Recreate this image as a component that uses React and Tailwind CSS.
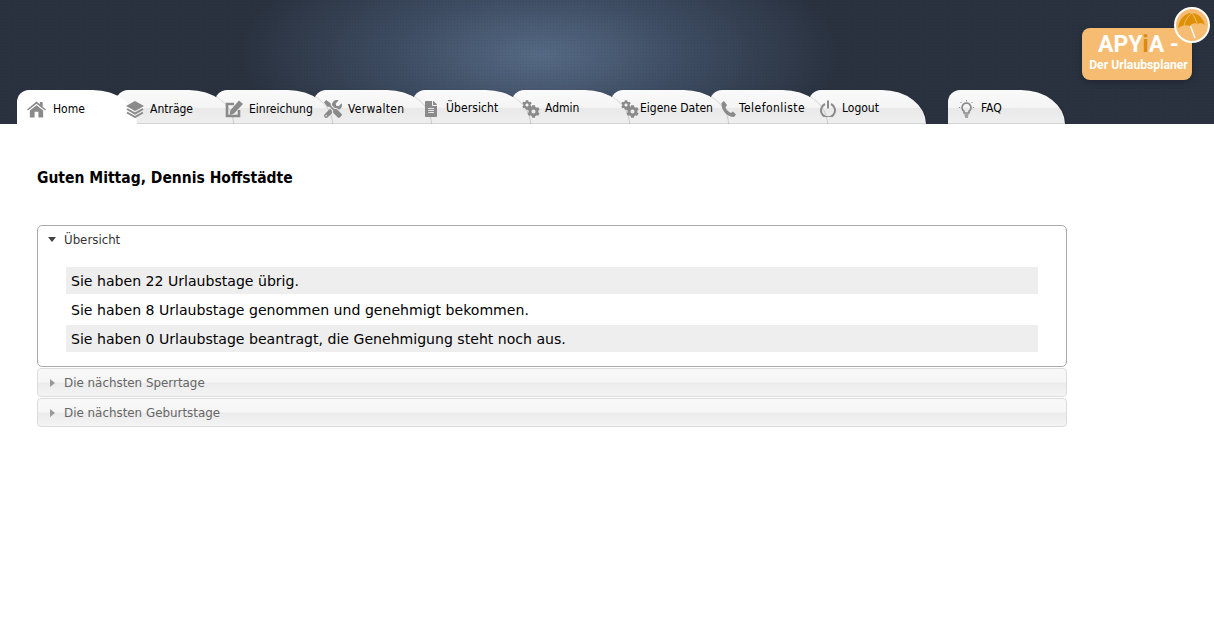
import { FaTools, FaFileAlt, FaCog } from 'react-icons/fa';

function HomeIcon() {
  return (
    <svg width="19" height="18" viewBox="0 0 20 18" fill="#8a8a8a" className="shrink-0">
      <path d="M0 9.5 L10 1 L13.5 4 V1.5 H16.5 V6.5 L20 9.5 L19 10.5 L10 3.5 L1 10.5 Z" />
      <path d="M3 10.5 L10 5 L17 10.5 V18 H12 V12 H8 V18 H3 Z" />
    </svg>
  );
}

function LayersIcon() {
  return (
    <svg width="18" height="18" viewBox="0 0 18 18" fill="none" className="shrink-0">
      <path d="M9 1 L18 6 L9 11 L0 6 Z" fill="#8a8a8a" />
      <path d="M1 9 L9 13.5 L17 9 M1 12.5 L9 17 L17 12.5" stroke="#8a8a8a" strokeWidth="2" />
    </svg>
  );
}

function PenIcon() {
  return (
    <svg width="18" height="18" viewBox="0 0 18 18" fill="none" className="shrink-0">
      <path d="M14 10 V16 H2 V4 H9" stroke="#8a8a8a" strokeWidth="2.6" />
      <path d="M14 0.5 L18 4 L9 13.5 L4.5 15 L5.5 10 Z" fill="#8a8a8a" />
    </svg>
  );
}

function PhoneIcon() {
  return (
    <svg width="15" height="16" viewBox="0 0 15 16" fill="#8a8a8a" className="shrink-0">
      <path d="M3 0 L6 4 L4.5 6.5 C5.5 9 7.5 11 10 12 L12 10.5 L15 13.5 L13 16 C6 16 0 9 0.5 2 Z" />
    </svg>
  );
}

function PowerIcon() {
  return (
    <svg width="16" height="17" viewBox="0 0 16 17" fill="none" stroke="#8a8a8a" strokeWidth="2" className="shrink-0">
      <path d="M5 4 A7 7 0 1 0 11 4" />
      <path d="M8 0.5 V8.5" />
    </svg>
  );
}

function BulbIcon() {
  return (
    <svg width="15" height="18" viewBox="0 0 15 18" fill="none" stroke="#8a8a8a" className="shrink-0">
      <path d="M7.5 3 A4.5 4.5 0 0 0 5 11.2 V13 H10 V11.2 A4.5 4.5 0 0 0 7.5 3 Z" strokeWidth="1.6" />
      <path d="M5.5 15 H9.5 M6 17 H9" strokeWidth="1.5" />
      <path d="M7.5 0 V1.5 M1.5 2 L2.5 3 M13.5 2 L12.5 3 M0 7.5 H1.2 M13.8 7.5 H15" strokeWidth="1" />
    </svg>
  );
}

function GearsIcon() {
  return (
    <span className="relative h-[18px] w-[18px] shrink-0 text-[#8a8a8a]">
      <FaCog size={10} className="absolute top-0 left-0" />
      <FaCog size={13} className="absolute right-0 bottom-0" />
    </span>
  );
}

const tabs = [
  { label: 'Home', icon: <HomeIcon />, active: true, pad: 'pl-[10px]', text: 'ml-[7px]' },
  { label: 'Anträge', icon: <LayersIcon />, pad: 'pl-[10px]', text: 'ml-[6px]' },
  { label: 'Einreichung', icon: <PenIcon />, pad: 'pl-[10px]', text: 'ml-[6px]' },
  { label: 'Verwalten', icon: <FaTools size={18} className="shrink-0 text-[#8a8a8a]" />, pad: 'pl-[10px]', text: 'ml-[6px] tracking-[0.3px]' },
  { label: 'Übersicht', icon: <FaFileAlt size={16} className="shrink-0 text-[#8a8a8a]" />, pad: 'pl-[10px]', text: 'ml-[7px] -mt-[2px] tracking-[0.1px]' },
  { label: 'Admin', icon: <GearsIcon />, pad: 'pl-[10px]', text: 'ml-[5px] -mt-[2px]' },
  { label: 'Eigene Daten', icon: <GearsIcon />, pad: 'pl-[10px]', text: 'ml-[1px] -mt-[2px]' },
  { label: 'Telefonliste', icon: <PhoneIcon />, pad: 'pl-[11px]', text: 'ml-[3px] -mt-[2px] tracking-[0.45px]' },
  { label: 'Logout', icon: <PowerIcon />, pad: 'pl-[11px]', text: 'ml-[6px] -mt-[2px]' },
];

// bg and content are siblings so that an icon stays above the neighbour's curve
function Tab({ tab, layer }) {
  const { label, icon, active, pad, text } = tab;
  return (
    <div className={`relative flex h-[34px] items-center pt-[3px] ${pad} ${active ? 'w-[120px]' : 'w-[117px]'}`}>
      <div
        className={`absolute inset-0 rounded-tl-[12px] rounded-tr-[44px_34px] ${
          active
            ? 'bg-white'
            : 'border-b border-[#d4d4d4] bg-[linear-gradient(#fafafa_0%,#f4f4f4_55%,#e9e9e9_56%,#efefef_100%)] shadow-[1px_0_1px_rgba(0,0,0,0.18)]'
        }`}
        style={{ zIndex: layer }}
      />
      <div className="relative z-[30] flex items-center">
        {icon}
        <span className={`${text} text-[12px] leading-none whitespace-nowrap text-black font-stretch-condensed`}>{label}</span>
      </div>
    </div>
  );
}

function Logo() {
  return (
    <div className="relative flex h-[52px] w-[110px] flex-col items-center rounded-[8px] bg-[#f6bd72] pt-[4px] pl-[3px] font-['Roboto',sans-serif] font-bold text-white shadow-[0_2px_6px_rgba(0,0,0,0.25)]">
      <div className="text-[23px] leading-[26px] whitespace-nowrap">
        APY<span className="text-[#d98a12]">i</span>A -
      </div>
      <div className="text-[12.2px] leading-[14px] whitespace-nowrap">Der Urlaubsplaner</div>
      <div className="absolute top-[-21px] right-[-18px] flex h-[36px] w-[36px] items-center justify-center rounded-full border-2 border-white bg-[#f6bd72]">
        <svg width="32" height="32" viewBox="2 2 32 32" fill="none">
          <path d="M4 21 C5 12 11 6 18 6 C24 6 29 11 31 18 C28 15.5 25 16 23.5 17.5 C21.5 15.5 18 16 16 19 C13 17.5 8 18 4 21 Z" fill="#dd9106" />
          <path d="M18 6 C13 10 11 14 10 18.5 M18 6 C20 9 22 13 23.5 17.5" stroke="#f6bd72" />
          <path d="M16.5 19 L21 31" stroke="white" strokeWidth="1.4" />
        </svg>
      </div>
    </div>
  );
}

function Closed({ title }) {
  return (
    <div className="flex h-[29px] items-center rounded-[4px] border border-[#dcdcdc] bg-[linear-gradient(#f8f8f8_0%,#f6f6f6_48%,#ebebeb_52%,#f4f4f4_100%)] pl-[12px]">
      <span className="h-0 w-0 border-y-[4px] border-l-[5px] border-y-transparent border-l-[#999]" />
      <span className="ml-[9px] pt-[2px] text-[11.9px] text-[#666]">{title}</span>
    </div>
  );
}

export default function App() {
  return (
    <div className="min-h-[636px] bg-white font-['DejaVu_Sans',sans-serif]">
      <header className="flex h-[124px] flex-col overflow-hidden bg-[#2a3240] bg-[radial-gradient(rgba(0,0,0,0.07)_0.8px,transparent_1px),radial-gradient(ellipse_300px_125px_at_540px_55px,#566a85_0%,#3f4e64_45%,#2a3240_100%)] bg-size-[3px_3px,100%_100%]">
        <div className="flex justify-end pt-[28px] pr-[22px]">
          <Logo />
        </div>
        <nav className="mt-auto flex pl-[17px]">
          {tabs.map((tab, i) => (
            <div key={tab.label} className={i === 0 ? '' : i === 1 ? '-ml-[21px]' : '-ml-[18px]'}>
              <Tab tab={tab} layer={20 - i} />
            </div>
          ))}
          <div className="ml-[22px]">
            <Tab tab={{ label: 'FAQ', icon: <BulbIcon />, pad: 'pl-[11px]', text: 'ml-[7px] -mt-[2px]' }} layer={1} />
          </div>
        </nav>
      </header>

      <main className="ml-[37px] w-[1030px]">
        <h1 className="pt-[44px] text-[15.5px] leading-[20px] font-bold text-black font-stretch-condensed">Guten Mittag, Dennis Hoffstädte</h1>

        <section className="mt-[37px] flex flex-col gap-[1px]">
          <div className="h-[142px] rounded-[5px] border border-[#aaa] bg-white">
            <div className="flex h-[28px] items-center pl-[10px]">
              <span className="-mt-[1px] h-0 w-0 border-x-[4px] border-t-[5px] border-x-transparent border-t-[#444]" />
              <span className="ml-[8px] pt-[2px] text-[11.8px] text-[#333]">Übersicht</span>
            </div>
            <div className="mt-[13px] ml-[28px] flex w-[972px] flex-col gap-[2px] text-[14.08px] text-black">
              <div className="flex h-[27px] items-center bg-[#eee] pt-[2px] pl-[5px]">Sie haben 22 Urlaubstage übrig.</div>
              <div className="flex h-[27px] items-center pt-[2px] pl-[5px]">Sie haben 8 Urlaubstage genommen und genehmigt bekommen.</div>
              <div className="flex h-[27px] items-center bg-[#eee] pt-[2px] pl-[5px]">Sie haben 0 Urlaubstage beantragt, die Genehmigung steht noch aus.</div>
            </div>
          </div>
          <Closed title="Die nächsten Sperrtage" />
          <Closed title="Die nächsten Geburtstage" />
        </section>
      </main>
    </div>
  );
}
